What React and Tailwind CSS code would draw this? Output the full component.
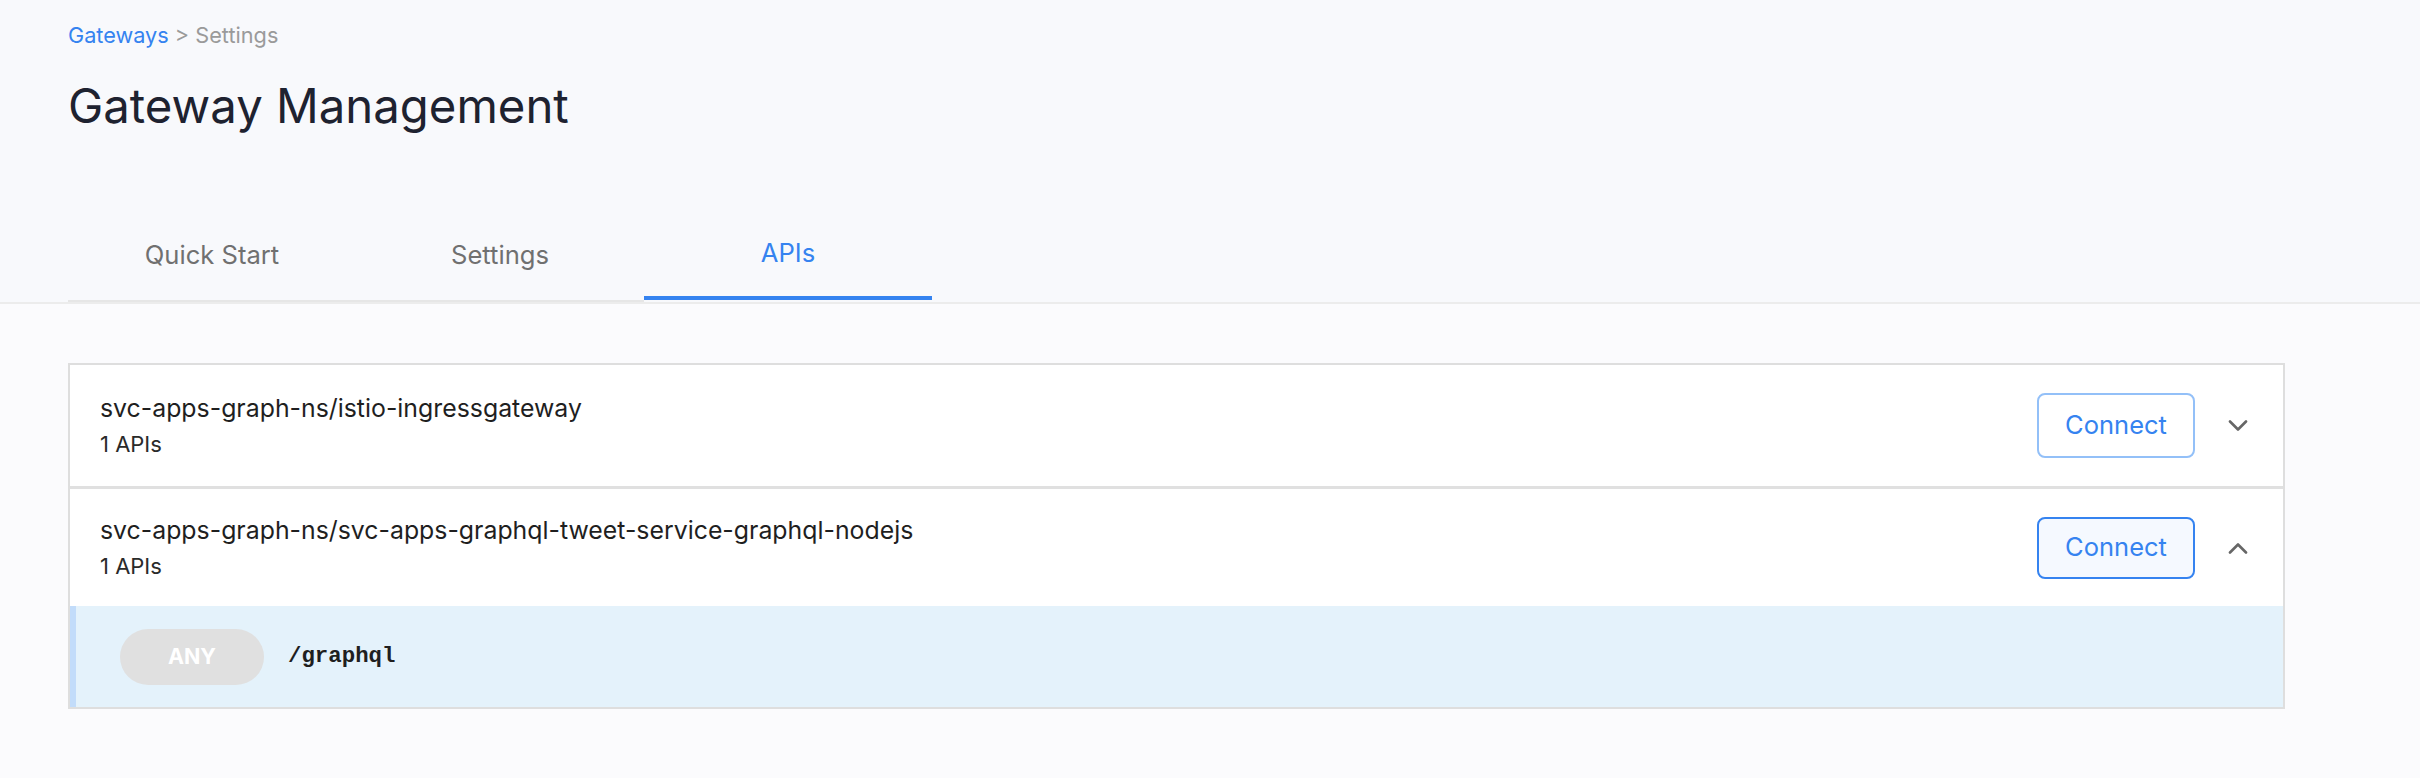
import React from "react";

const Chevron = ({ up }) => (
  <svg width="20" height="12" viewBox="0 0 20 12" className="block">
    <path
      d={up ? "M2 10.5 L10 2.5 L18 10.5" : "M2 1.5 L10 9.5 L18 1.5"}
      fill="none"
      stroke="#666666"
      strokeWidth="2.6"
      strokeLinecap="round"
      strokeLinejoin="round"
    />
  </svg>
);

function Row({ title, h, active, up }) {
  return (
    <div className={`flex items-center justify-between pl-[30px] pr-[35px] bg-white ${h}`}>
      <div className="flex flex-col gap-[3px]">
        <div className="text-[24.85px] leading-[34px] text-[#1f1f1f]">{title}</div>
        <div className="text-[22px] leading-[32px] text-[#2a2a2a]">1 APIs</div>
      </div>
      <div className="flex items-center gap-[33px]">
        <button
          className={
            active
              ? "w-[158px] h-[62px] rounded-[8px] border-2 border-[#3583f0] bg-[#f5f9ff] text-[25.5px] text-[#3583f0]"
              : "w-[158px] h-[65px] rounded-[8px] border-2 border-[#93c0f8] bg-white text-[25.5px] text-[#3583f0]"
          }
        >
          Connect
        </button>
        <Chevron up={up} />
      </div>
    </div>
  );
}

export default function App() {
  return (
    <div
      className="min-h-[778px] bg-[#fbfbfd]"
      style={{ fontFamily: "Inter, 'Noto Sans', sans-serif" }}
    >
      <div className="bg-[#f8f9fc] border-b-2 border-[#ececec]">
        <div className="pl-[68px] pt-[20px]">
          <div className="text-[21.7px] leading-[30px]">
            <span className="text-[#3583f0]">Gateways</span>
            <span className="text-[#9a9a9a]"> &gt; Settings</span>
          </div>
          <h1 className="mt-[28px] text-[47.3px] leading-[56px] text-[#1e2230] font-normal">
            Gateway Management
          </h1>
          <div className="mt-[76px] flex items-end">
            <div className="w-[288px] h-[92px] flex items-center justify-center border-b-2 border-[#e6e6e6] text-[25.6px] text-[#707070]">
              Quick Start
            </div>
            <div className="w-[288px] h-[92px] flex items-center justify-center border-b-2 border-[#e6e6e6] text-[25.6px] text-[#707070]">
              Settings
            </div>
            <div className="w-[288px] h-[90px] mb-[2px] flex items-center justify-center border-b-4 border-[#3583f0] text-[25.6px] text-[#3583f0]">
              APIs
            </div>
          </div>
        </div>
      </div>

      <div className="pl-[68px] pr-[135px] pt-[59px]">
        <div className="border-2 border-[#dedede] bg-white">
          <Row title="svc-apps-graph-ns/istio-ingressgateway" h="h-[121px]" up={false} />
          <div className="h-[3px] bg-[#e0e0e0]" />
          <Row
            title="svc-apps-graph-ns/svc-apps-graphql-tweet-service-graphql-nodejs"
            h="h-[117px]"
            active
            up
          />
          <div className="h-[101px] bg-[#e4f2fb] border-l-[6px] border-[#c2dcfa] flex items-center pl-[44px] gap-[24px]">
            <div className="w-[144px] h-[56px] rounded-full bg-[#e0e0e0] flex items-center justify-center text-white font-bold text-[21.5px]">
              ANY
            </div>
            <div
              className="text-[22.4px] font-bold text-[#1f1f1f]"
              style={{ fontFamily: "'Liberation Mono', 'Courier New', monospace" }}
            >
              /graphql
            </div>
          </div>
        </div>
      </div>
    </div>
  );
}
